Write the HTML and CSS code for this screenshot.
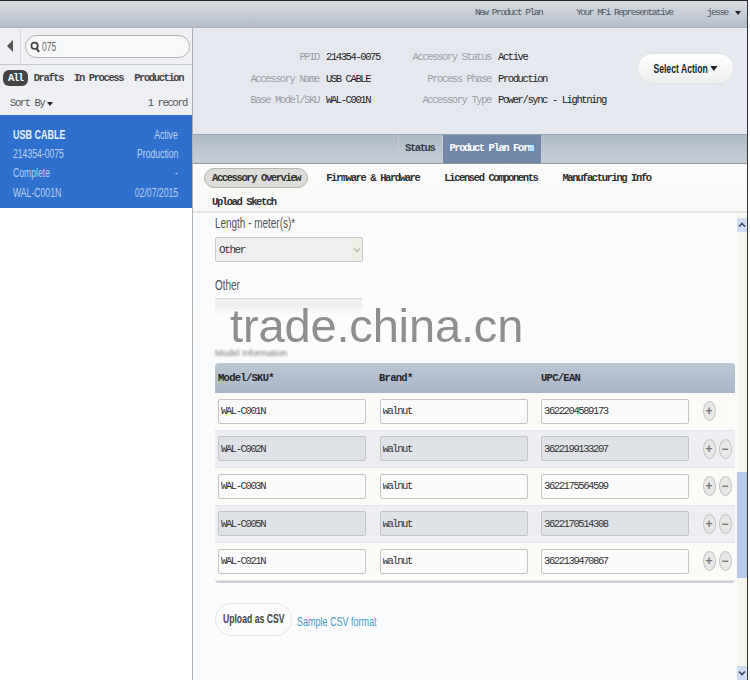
FILE: index.html
```html
<!doctype html>
<html lang="en">
  <head>
    <meta charset="UTF-8" />
    <title>Product Plan Form</title>
    <link rel="stylesheet" href="styles.css">
  </head>
  <body>
    <div class="app">
      <div class="topbar">
        <a class="top-link">New Product Plan</a>
        <a class="top-link">Your MFi Representative</a>
        <a class="top-link top-user">jesse <span class="caret"></span></a>
      </div>

      <div class="sidebar">
        <div class="search-row">
          <div class="back-cell"><span class="back-arrow"></span></div>
          <div class="search-box">
            <svg class="search-icon" width="10" height="12" viewBox="0 0 10 12">
              <circle cx="4.6" cy="4.8" r="3.2" fill="none" stroke="#444" stroke-width="1.6" />
              <path d="M6.6 7.4 9 11" stroke="#444" stroke-width="2" />
            </svg>
            <span class="condensed">075</span>
          </div>
        </div>
        <div class="filters">
          <span class="filter filter-on">All</span>
          <span class="filter">Drafts</span>
          <span class="filter">In Process</span>
          <span class="filter">Production</span>
        </div>
        <div class="sort-row">
          <span>Sort By<span class="caret"></span></span>
          <span>1 record</span>
        </div>
        <div class="record">
          <div class="record-row record-title"><strong>USB CABLE</strong><span>Active</span></div>
          <div class="record-row"><span>214354-0075</span><span>Production</span></div>
          <div class="record-row"><span>Complete</span><span>-</span></div>
          <div class="record-row"><span>WAL-C001N</span><span>02/07/2015</span></div>
        </div>
      </div>

      <div class="main">
        <div class="summary">
          <div class="facts">
            <span class="fact-label">PPID</span><span class="fact-value">214354-0075</span>
            <span class="fact-label">Accessory Name</span><span class="fact-value">USB CABLE</span>
            <span class="fact-label">Base Model/SKU</span><span class="fact-value">WAL-C001N</span>
          </div>
          <div class="facts facts-2">
            <span class="fact-label">Accessory Status</span><span class="fact-value">Active</span>
            <span class="fact-label">Process Phase</span><span class="fact-value">Production</span>
            <span class="fact-label">Accessory Type</span><span class="fact-value">Power/sync - Lightning</span>
          </div>
          <button class="action-btn"><span class="btn-text">Select Action<span class="caret caret-big"></span></span></button>
        </div>

        <div class="tabbar">
          <span class="tab">Status</span>
          <span class="tab tab-on">Product Plan Form</span>
        </div>

        <div class="subnav">
          <span class="subnav-item subnav-on">Accessory Overview</span>
          <span class="subnav-item">Firmware &amp; Hardware</span>
          <span class="subnav-item">Licensed Components</span>
          <span class="subnav-item">Manufacturing Info</span>
          <span class="subnav-item">Upload Sketch</span>
        </div>

        <div class="body-row">
          <div class="form">
            <label class="field-label">Length - meter(s)*</label>
            <div class="select-box">
              <span>Other</span>
              <span class="select-arrow">
                <svg width="8" height="6" viewBox="0 0 8 6"><path d="M1 1.5 4 4.5 7 1.5" fill="none" stroke="#b9bcae" stroke-width="1.5" /></svg>
              </span>
            </div>
            <label class="field-label field-other">Other</label>
            <div class="other-input"></div>
            <div class="section-title">Model Information</div>

            <div class="model-table">
              <div class="table-head">
                <span>Model/SKU*</span>
                <span>Brand*</span>
                <span>UPC/EAN</span>
              </div>
              <div class="table-row">
                <input class="cell" value="WAL-C001N" /><input class="cell" value="walnut" /><input class="cell" value="3622204589173" />
                <div class="row-btns"><span class="round-btn">+</span></div>
              </div>
              <div class="table-row row-alt">
                <input class="cell" value="WAL-C002N" /><input class="cell" value="walnut" /><input class="cell" value="3622199133207" />
                <div class="row-btns"><span class="round-btn">+</span><span class="round-btn">&minus;</span></div>
              </div>
              <div class="table-row">
                <input class="cell" value="WAL-C003N" /><input class="cell" value="walnut" /><input class="cell" value="3622175564599" />
                <div class="row-btns"><span class="round-btn">+</span><span class="round-btn">&minus;</span></div>
              </div>
              <div class="table-row row-alt">
                <input class="cell" value="WAL-C005N" /><input class="cell" value="walnut" /><input class="cell" value="3622170514308" />
                <div class="row-btns"><span class="round-btn">+</span><span class="round-btn">&minus;</span></div>
              </div>
              <div class="table-row">
                <input class="cell" value="WAL-C021N" /><input class="cell" value="walnut" /><input class="cell" value="3622139470867" />
                <div class="row-btns"><span class="round-btn">+</span><span class="round-btn">&minus;</span></div>
              </div>
            </div>

            <div class="upload-row">
              <button class="upload-btn"><span class="btn-text">Upload as CSV</span></button>
              <a class="sample-link">Sample CSV format</a>
            </div>

            <!-- site watermark sits over the form -->
            <div class="watermark">trade.china.cn</div>
          </div>

          <div class="scrollbar">
            <div class="scroll-end">
              <svg width="8" height="6" viewBox="0 0 8 6"><path d="M1 4.5 4 1.5 7 4.5" fill="none" stroke="#3a4a66" stroke-width="1.6" /></svg>
            </div>
            <div class="scroll-track-top"></div>
            <div class="scroll-thumb"></div>
            <div class="scroll-track"></div>
            <div class="scroll-end">
              <svg width="8" height="6" viewBox="0 0 8 6"><path d="M1 1.5 4 4.5 7 1.5" fill="none" stroke="#3a4a66" stroke-width="1.6" /></svg>
            </div>
          </div>
        </div>
      </div>
    </div>
  </body>
</html>
```

FILE: styles.css
```css
* {
  margin: 0;
  padding: 0;
  box-sizing: border-box;
}

html,
body {
  height: 100%;
  overflow: hidden;
  background: white;
}

body {
  font-family: "Liberation Mono", monospace;
  font-size: 10.5px;
  letter-spacing: -1.4px;
  color: #222;
}

.app {
  width: 748px;
  height: 680px;
  display: grid;
  grid-template-columns: 193px 1fr;
  grid-template-rows: 27px 1fr;
  border-top: 1px solid #222;
  border-right: 1px solid #333;
  filter: blur(0.35px);
}

.caret {
  display: inline-block;
  width: 0;
  height: 0;
  margin-left: 3px;
  border-left: 3px solid transparent;
  border-right: 3px solid transparent;
  border-top: 4px solid #222;
  vertical-align: 0;
}

.caret-big {
  border-left-width: 5px;
  border-right-width: 5px;
  border-top-width: 5px;
  vertical-align: 2px;
}

/* the original sans text is a condensed face */
.condensed {
  display: inline-block;
  transform: scaleX(0.72);
  transform-origin: left;
}

/* top bar */
.topbar {
  grid-column: 1 / 3;
  display: flex;
  align-items: center;
  justify-content: flex-end;
  gap: 34px;
  padding: 0 6px 3px 0;
  background: linear-gradient(#d8dce2, #b4bcc8);
  border-bottom: 1px solid #aab2bd;
}

.top-link {
  font-size: 9.5px;
  letter-spacing: -1.5px;
  color: #4c5560;
}

/* left column */
.sidebar {
  background: white;
  border-right: 1px solid #a9b0ba;
  display: flex;
  flex-direction: column;
}

.search-row {
  display: flex;
  height: 37px;
  background: #edeff3;
  border-bottom: 1px solid #c4c9d0;
}

.back-cell {
  width: 21px;
  display: flex;
  align-items: center;
  justify-content: center;
  border-right: 1px solid #d5d9df;
}

.back-arrow {
  width: 0;
  height: 0;
  border-top: 6px solid transparent;
  border-bottom: 6px solid transparent;
  border-right: 6px solid #555;
}

.search-box {
  width: 165px;
  height: 23px;
  margin: 7px 0 0 4px;
  display: flex;
  align-items: center;
  gap: 2px;
  padding-left: 4px;
  background: #f7f8f9;
  border: 1px solid #aeb3ae;
  border-radius: 12px;
  font-family: "Liberation Sans", sans-serif;
  font-size: 12px;
  letter-spacing: 0;
  color: #666;
}

.filters {
  height: 25px;
  display: flex;
  align-items: center;
  padding-left: 3px;
  background: #edeff3;
  font-weight: bold;
  white-space: nowrap;
  letter-spacing: -1.4px;
  color: #444;
}

.filter {
  margin-right: 11px;
}

.filter-on {
  padding: 2px 5px;
  margin-right: 6px;
  background: #444;
  color: white;
  border-radius: 6px;
}

.sort-row {
  height: 25px;
  display: flex;
  align-items: center;
  justify-content: space-between;
  padding: 0 5px 0 10px;
  background: #edeff3;
  color: #555;
}

.record {
  height: 93px;
  padding: 10px 14px 0 13px;
  background: #2f6fce;
  color: #bcd0ee;
  font-family: "Liberation Sans", sans-serif;
  font-size: 12px;
  letter-spacing: 0;
}

.record-row {
  height: 19.3px;
  display: flex;
  align-items: center;
  justify-content: space-between;
}

.record-row > * {
  display: inline-block;
  transform: scaleX(0.72);
  transform-origin: right;
}

.record-row > :first-child {
  transform-origin: left;
}

.record-title strong {
  font-size: 12.5px;
  color: #e8effa;
}

/* right column */
.main {
  display: flex;
  flex-direction: column;
  min-width: 0;
}

.summary {
  height: 106px;
  display: flex;
  align-items: flex-start;
  padding-top: 19px;
  background: #e5e8ee;
}

.facts {
  display: grid;
  grid-template-columns: 126px 66px;
  column-gap: 7px;
  line-height: 21.5px;
}

.facts-2 {
  grid-template-columns: 99px auto;
}

.fact-label {
  text-align: right;
  color: #9aa0a8;
}

.fact-value {
  color: #222;
}

.action-btn {
  display: flex;
  align-items: center;
  justify-content: center;
  margin: 6px 13px 0 auto;
  width: 97px;
  height: 31px;
  background: linear-gradient(white, #eceded);
  border: 1px solid #e0e2e6;
  border-radius: 15px;
  font-family: "Liberation Sans", sans-serif;
  font-size: 12px;
  font-weight: bold;
  letter-spacing: 0;
  color: #222;
}

.btn-text {
  flex: none;
  display: inline-block;
  white-space: nowrap;
  transform: scaleX(0.72);
}

.tabbar {
  height: 30px;
  display: flex;
  padding-left: 205px;
  background: linear-gradient(#b0bbc9, #c5ccd6);
  border-top: 1px solid #99a4b3;
  border-bottom: 1px solid #8e98a6;
}

.tab {
  display: flex;
  align-items: center;
  padding: 0 8px 3px 6px;
  font-weight: bold;
  color: #333d4a;
  border-left: 1px solid #c5ccd6;
}

.tab-on {
  background: #7288a8;
  color: white;
}

.subnav {
  height: 49px;
  display: flex;
  flex-wrap: wrap;
  align-content: flex-start;
  column-gap: 9px;
  padding: 4px 40px 0 11px;
  background: linear-gradient(#fcfcfa, #f7f7f5);
  border-bottom: 2px solid #e4e6e8;
  font-weight: bold;
  color: #2d2d2d;
}

.subnav-item {
  height: 20px;
  line-height: 20px;
  padding: 0 8px;
  margin-bottom: 4px;
  white-space: nowrap;
}

.subnav-on {
  background: #dcdcd8;
  border: 1px solid #b4b6b2;
  border-radius: 10px;
  line-height: 18px;
  padding: 0 7px;
  margin-right: 1px;
}

.body-row {
  flex: 1;
  display: flex;
  min-height: 0;
}

.form {
  position: relative;
  flex: 1;
  padding: 3px 2px 0 22px;
  background: #fafbfc;
}

.field-label {
  display: block;
  font-family: "Liberation Sans", sans-serif;
  font-size: 14px;
  letter-spacing: 0;
  line-height: 15px;
  color: #555;
  transform: scaleX(0.71);
  transform-origin: left;
}

.select-box {
  width: 148px;
  height: 25px;
  margin-top: 6px;
  display: flex;
  align-items: center;
  justify-content: space-between;
  padding-left: 3px;
  background: #efefef;
  border: 1px solid #c8cac8;
  border-radius: 2px;
  font-size: 11px;
  color: #333;
}

.select-arrow {
  width: 11px;
  height: 100%;
  display: flex;
  align-items: center;
  justify-content: center;
  background: #eeeee6;
}

.field-other {
  margin-top: 16px;
}

.other-input {
  width: 147px;
  height: 26px;
  margin-top: 5px;
  background: #eeeeee;
  border-top: 1px solid #d6d6d6;
}

.section-title {
  height: 10px;
  margin: 24px 0 5px;
  font-family: "Liberation Sans", sans-serif;
  font-size: 9px;
  letter-spacing: 0;
  line-height: 10px;
  color: #777;
  filter: blur(1.2px);
}

.model-table {
  border-bottom: 2px solid #c9ced4;
  border-radius: 0 0 4px 4px;
  background: #fafaf7;
}

.table-head {
  height: 30px;
  display: grid;
  grid-template-columns: 161px 162px 1fr;
  align-items: center;
  padding-left: 3px;
  background: linear-gradient(#bcc7d5, #a9b6c6);
  border-radius: 4px 4px 0 0;
  font-size: 10.5px;
  font-weight: bold;
  letter-spacing: -0.72px;
  color: #1f2328;
}

.table-row {
  height: 37.5px;
  display: flex;
  align-items: center;
  padding-left: 3px;
  border-bottom: 1px solid #e2e5e9;
}

.row-alt {
  background: #eceef2;
}

.cell {
  width: 148px;
  height: 25px;
  margin-right: 13.5px;
  padding-left: 2px;
  background: #fbfafa;
  border: 1px solid #c4c5c2;
  border-radius: 2px;
  font-family: "Liberation Mono", monospace;
  font-size: 10.5px;
  letter-spacing: -1.4px;
  color: #333;
}

.row-alt .cell {
  background: #dfe2e7;
}

.row-btns {
  display: flex;
  gap: 3px;
}

.round-btn {
  width: 13px;
  height: 20px;
  display: flex;
  align-items: center;
  justify-content: center;
  background: #e8e8e6;
  border: 1px solid #c3c5c3;
  border-radius: 50%;
  font-family: "Liberation Sans", sans-serif;
  font-size: 12px;
  font-weight: bold;
  letter-spacing: 0;
  color: #777;
}

.upload-row {
  display: flex;
  align-items: center;
  gap: 5px;
  margin-top: 20px;
}

.upload-btn {
  display: flex;
  align-items: center;
  justify-content: center;
  width: 77px;
  height: 33px;
  background: #fbfbfb;
  border: 1px solid #e3e5e8;
  border-radius: 16px;
  font-family: "Liberation Sans", sans-serif;
  font-size: 12px;
  font-weight: bold;
  letter-spacing: 0;
  color: #444;
}

.sample-link {
  margin-top: 5px;
  font-family: "Liberation Sans", sans-serif;
  font-size: 12px;
  letter-spacing: 0;
  color: #3f9cc4;
  display: inline-block;
  transform: scaleX(0.75);
  transform-origin: left;
}

.watermark {
  position: absolute;
  left: 0;
  right: 0;
  top: 92px;
  height: 42px;
  padding-left: 37px;
  background: linear-gradient(rgba(255, 255, 255, 0), #fcfcfc 25%, #fcfcfc 85%, rgba(255, 255, 255, 0));
  font-family: "Liberation Sans", sans-serif;
  font-size: 47px;
  letter-spacing: -0.15px;
  line-height: 42px;
  color: #8e8e8e;
}

.scrollbar {
  width: 10px;
  display: flex;
  flex-direction: column;
  padding-top: 5px;
  background: #f7f6ee;
}

.scroll-end {
  height: 14px;
  flex: none;
  display: flex;
  align-items: center;
  justify-content: center;
  background: #cfdcf2;
}

.scroll-track-top {
  height: 240px;
  flex: none;
}

.scroll-thumb {
  height: 106px;
  flex: none;
  background: #b7caec;
}

.scroll-track {
  flex: 1;
}
```
